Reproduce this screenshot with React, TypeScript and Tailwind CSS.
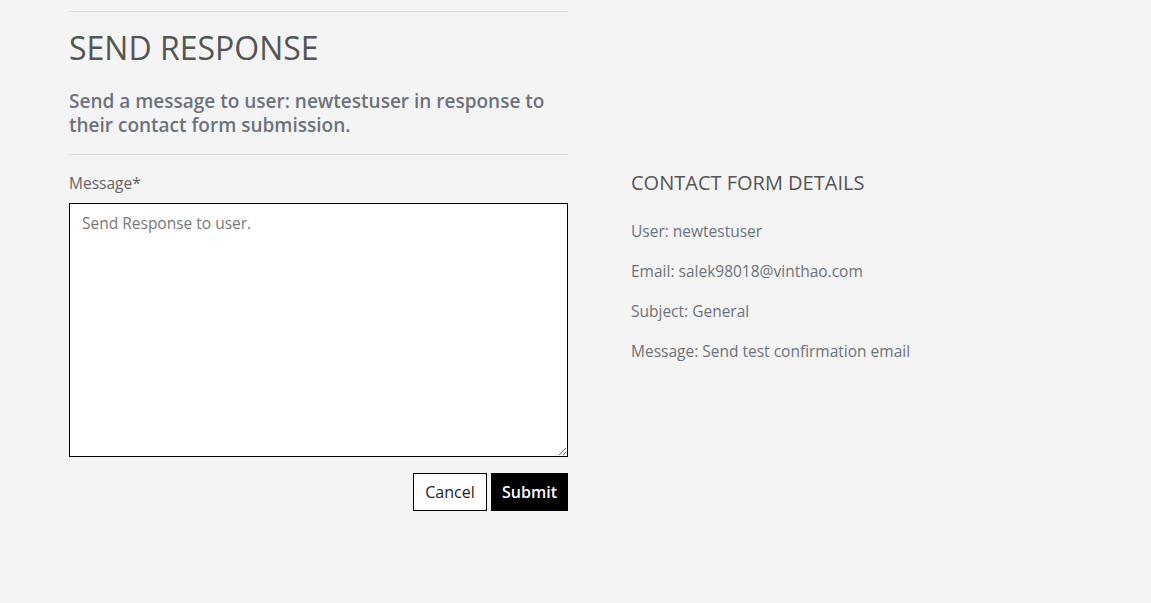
import React from 'react'

const details = [
    { label: 'User', value: 'newtestuser' },
    { label: 'Email', value: 'salek98018@vinthao.com' },
    { label: 'Subject', value: 'General' },
    { label: 'Message', value: 'Send test confirmation email' },
]

export default function App() {
    return (
        <div className="min-h-[603px] bg-[#f4f4f4] font-['Open_Sans',sans-serif]">
            <div className="flex pl-[69px] pt-[11px]">
                <div className="w-[499px] shrink-0">
                    <hr className="border-t border-[#dcdcdc]" />
                    <h1 className="mt-[16px] text-[32px] leading-[40px] text-[#555555]">SEND RESPONSE</h1>
                    <p className="mt-[21px] text-[19px] leading-[24px] font-semibold text-[#6c737b]">
                        Send a message to user: newtestuser in response to their contact form submission.
                    </p>
                    <hr className="mt-[17px] border-t border-[#dcdcdc]" />
                    <form className="mt-[18px]">
                        <label className="block text-[15.5px] leading-[20px] text-[#666666]">Message*</label>
                        <textarea
                            className="mt-[10px] block h-[254px] w-full resize-y border border-black bg-white px-[12px] py-[8px] text-[15.5px] leading-[22px] text-[#444] placeholder:text-[#777] outline-none"
                            placeholder="Send Response to user."
                        />
                        <div className="mt-[16px] flex justify-end gap-[4px]">
                            <button type="button" className="h-[38px] w-[74px] border border-black bg-white text-[16px] text-[#222]">Cancel</button>
                            <button type="submit" className="h-[38px] w-[77px] border border-black bg-black text-[16px] font-semibold text-white">Submit</button>
                        </div>
                    </form>
                </div>
                <div className="ml-[63px] pt-[159px]">
                    <h2 className="text-[20px] leading-[26px] text-[#555555]">CONTACT FORM DETAILS</h2>
                    <div className="mt-[24px] flex flex-col gap-[18px]">
                        {details.map((d) => (
                            <p key={d.label} className="text-[15.5px] leading-[22px] text-[#6c737b]">
                                {d.label}: {d.value}
                            </p>
                        ))}
                    </div>
                </div>
            </div>
        </div>
    )
}
